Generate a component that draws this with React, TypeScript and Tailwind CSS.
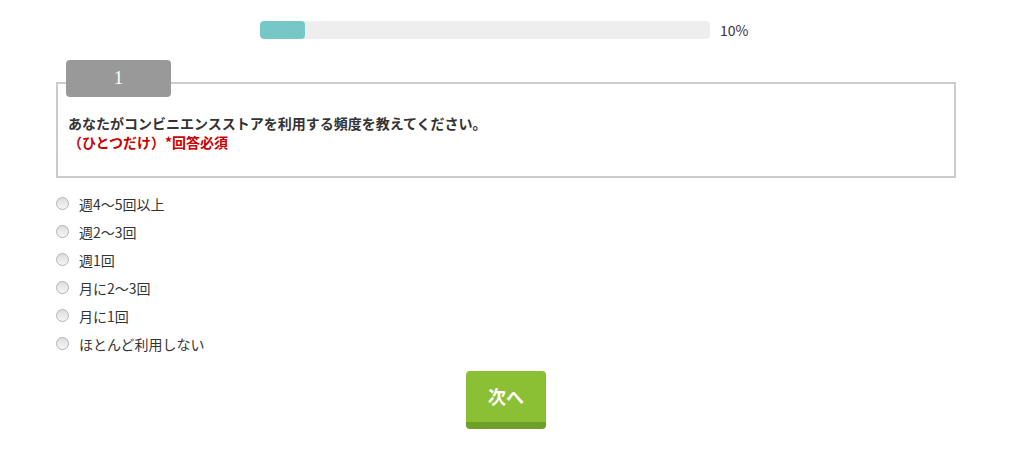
import React from "react";

const options = [
  "週4〜5回以上",
  "週2〜3回",
  "週1回",
  "月に2〜3回",
  "月に1回",
  "ほとんど利用しない",
];

export default function App() {
  return (
    <div
      className="min-h-[456px] w-full bg-white text-[#333333]"
      style={{ fontFamily: '"Meiryo", "Noto Sans CJK JP", "Noto Sans", sans-serif' }}
    >
      <div className="ml-[56px] w-[900px] pt-[21px]">
        {/* progress */}
        <div className="flex items-center pl-[204px]">
          <div className="h-[18px] w-[450px] overflow-hidden rounded-[4px] bg-[#eeeeee]">
            <div className="h-full w-[45px] rounded-[4px] bg-[#76c8c6]" />
          </div>
          <span className="ml-[10px] text-[14px] leading-[18px] text-[#3a2f3f]">10%</span>
        </div>

        {/* question box */}
        <div className="relative mt-[43px] border-2 border-[#cccccc] px-[10px] pb-[24px] pt-[30px]">
          <div
            className="absolute left-[8px] top-[-24px] flex h-[37px] w-[105px] items-center justify-center rounded-[4px] bg-[#999999] text-[19px] text-white"
            style={{ fontFamily: '"Liberation Serif", serif' }}
          >
            1
          </div>
          <p className="text-[14px] font-bold leading-[19px] text-[#333333]">
            あなたがコンビニエンスストアを利用する頻度を教えてください。
          </p>
          <p className="text-[14px] font-bold leading-[19px] text-[#cc0000]">
            （ひとつだけ）*回答必須
          </p>
        </div>

        {/* options */}
        <div className="mt-[12px] flex flex-col">
          {options.map((o) => (
            <label key={o} className="flex h-[28px] items-center">
              <span className="mb-[2px] h-[13px] w-[13px] rounded-full border border-[#b3b3b3] bg-gradient-to-b from-[#dcdcdc] to-[#f7f7f7]" />
              <span className="ml-[10px] text-[14px] leading-[28px] text-[#333333]">{o}</span>
            </label>
          ))}
        </div>

        {/* next button */}
        <div className="mt-[13px] flex justify-center">
          <button className="flex h-[58px] w-[80px] items-center justify-center rounded-[4px] border-b-[7px] border-[#6e9f28] bg-[#8bc034] pb-[1px] text-[18px] font-bold text-white">
            次へ
          </button>
        </div>
      </div>
    </div>
  );
}
